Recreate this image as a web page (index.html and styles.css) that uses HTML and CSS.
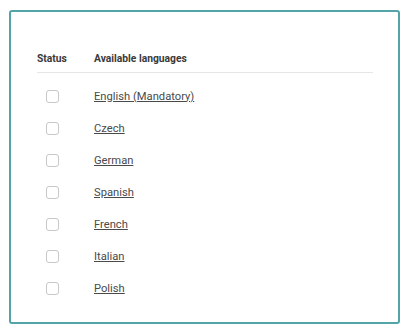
FILE: index.html
```html
<!DOCTYPE html>
<html lang="en">
<head>
  <meta charset="UTF-8" />
  <meta name="viewport" content="width=device-width, initial-scale=1" />
  <title>Languages</title>
  <link rel="stylesheet" href="styles.css">
</head>
<body>
  <div class="card">
    <div class="lang-head">
      <span class="col-status">Status</span>
      <span>Available languages</span>
    </div>
    <ul class="lang-list">
      <li><span class="col-status"><span class="check"></span></span><a href="#">English (Mandatory)</a></li>
      <li><span class="col-status"><span class="check"></span></span><a href="#">Czech</a></li>
      <li><span class="col-status"><span class="check"></span></span><a href="#">German</a></li>
      <li><span class="col-status"><span class="check"></span></span><a href="#">Spanish</a></li>
      <li><span class="col-status"><span class="check"></span></span><a href="#">French</a></li>
      <li><span class="col-status"><span class="check"></span></span><a href="#">Italian</a></li>
      <li><span class="col-status"><span class="check"></span></span><a href="#">Polish</a></li>
    </ul>
  </div>
</body>
</html>
```

FILE: styles.css
```css
*, *::before, *::after { box-sizing: border-box; }
body {
  margin: 0;
  padding: 10px 12px 0 9px;
  font-family: Roboto, 'Liberation Sans', sans-serif;
  background: #fff;
  color: #333;
}
.card {
  width: 391px;
  height: 314px;
  border: 2px solid #52a4a6;
  border-radius: 3px;
  padding: 40px 25px 18px 26px;
}
.lang-head {
  display: flex;
  font-size: 10.3px;
  font-weight: bold;
  line-height: 14px;
  color: #3a3a3a;
  padding-bottom: 6px;
  border-bottom: 1px solid #e6e6e6;
}
.col-status {
  width: 57px;
  flex-shrink: 0;
}
.lang-list {
  list-style: none;
  margin: 0;
  padding: 7px 0 0;
}
.lang-list li {
  display: flex;
  align-items: center;
  height: 32px;
  font-size: 11.2px;
}
.lang-list a {
  color: #4a4a4a;
  text-decoration: underline;
}
.check {
  display: block;
  width: 13px;
  height: 13px;
  margin-left: 9px;
  border: 1px solid #c8c8c8;
  border-radius: 3px;
  background: #fff;
}
```
